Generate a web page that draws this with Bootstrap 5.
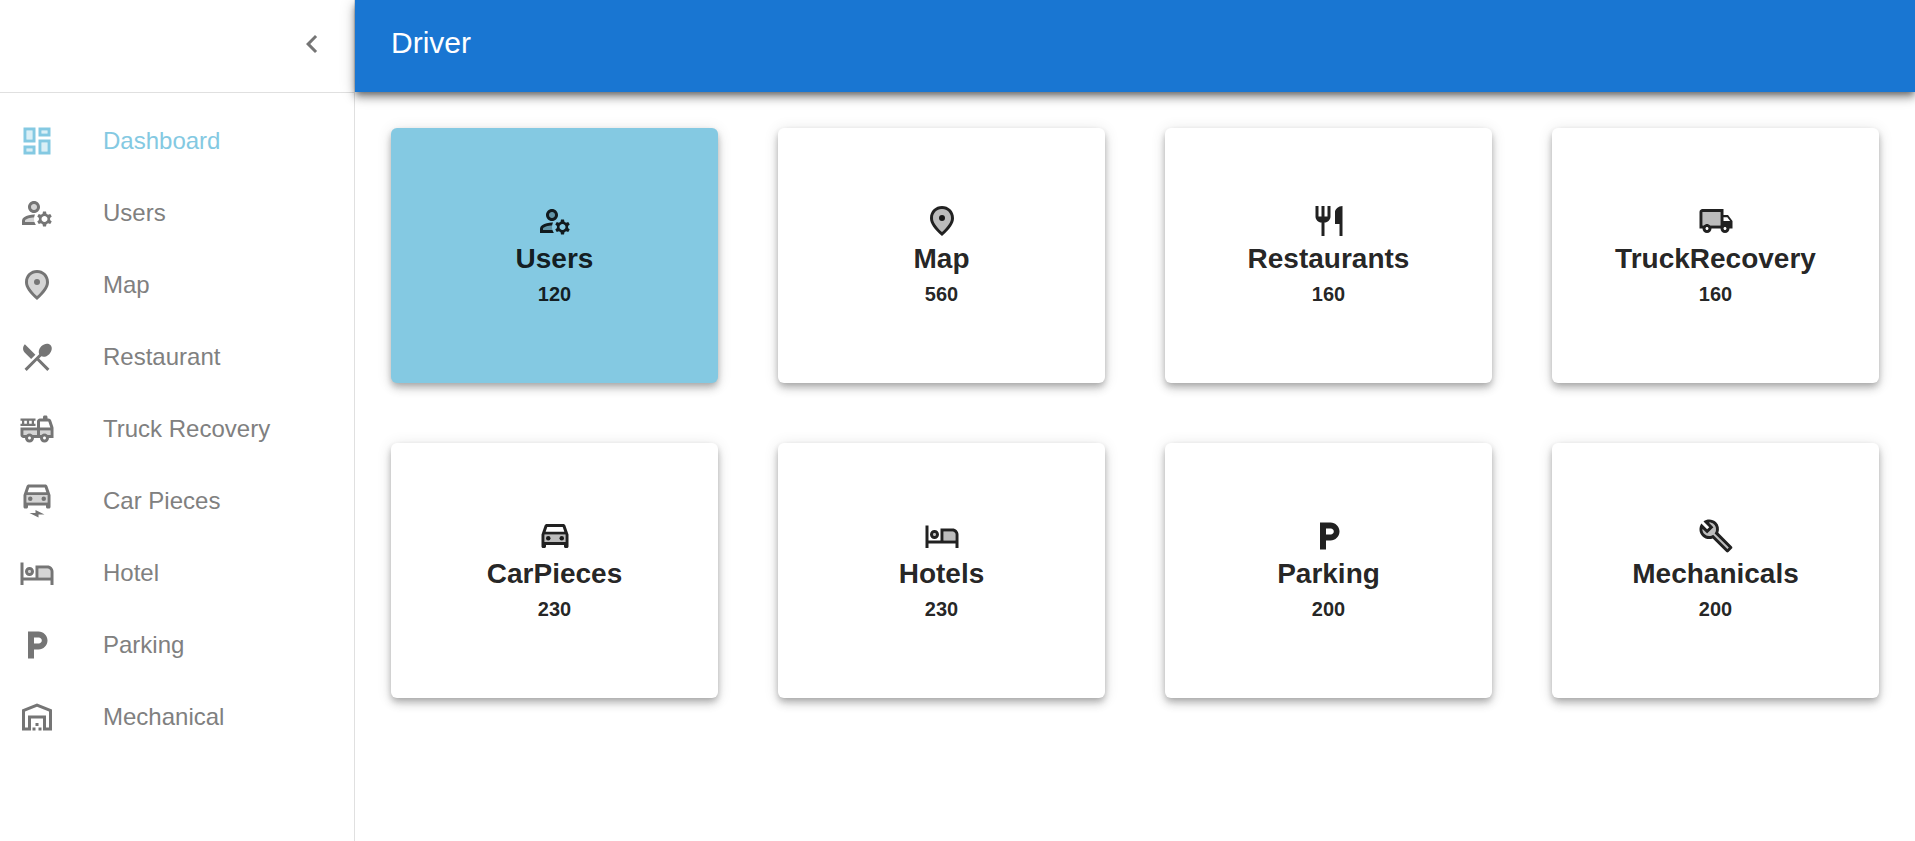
<!DOCTYPE html>
<html lang="en">
<head>
<meta charset="utf-8">
<meta name="viewport" content="width=device-width, initial-scale=1">
<title>Driver</title>
<link href="https://cdn.jsdelivr.net/npm/bootstrap@5.3.0/dist/css/bootstrap.min.css" rel="stylesheet">
<style>
  :root { --accent: #84c9e2; --line: #e0e0e0; --ink: rgba(0, 0, 0, .87); }
  body { font-family: "Liberation Sans", Arial, sans-serif; font-size: 24px; color: var(--ink); background: #fff; }
  .sidebar { width: 355px; border-right: 1px solid var(--line); }
  .sidebar-top { height: 93px; padding: 0 12px 4px 0; border-bottom: 1px solid var(--line); }
  .collapse-btn { width: 60px; height: 60px; padding: 0; border: 0; color: #757575; }
  .side-list { padding: 12px 0; }
  .side-link { height: 72px; padding: 0 19px; gap: 48px; color: #808080; border-radius: 0; }
  .side-link svg { color: #757575; }
  .side-link:hover { color: #606060; background: rgba(0, 0, 0, .04); }
  .side-link.active, .side-link.active svg { color: var(--accent); }
  .ico { width: 36px; height: 36px; fill: currentColor; flex: none; }
  .tone { opacity: .3; }
  .topbar { height: 92px; padding: 0 36px 6px; background: #1976d2; color: #fff;
    box-shadow: 0 3px 6px -2px rgba(0,0,0,.4), 0 6px 8px 0 rgba(0,0,0,.28), 0 2px 15px 0 rgba(0,0,0,.2); }
  .topbar h1 { font-size: 30px; line-height: 48px; font-weight: 400; }
  .content { padding: 36px; }
  .tiles { --bs-gutter-x: 60px; --bs-gutter-y: 60px; }
  .tile { height: 255px; border: 0; border-radius: 6px; color: var(--ink);
    box-shadow: 0 3px 6px -1px rgba(0,0,0,.2), 0 6px 8px 0 rgba(0,0,0,.14), 0 2px 15px 0 rgba(0,0,0,.12); }
  .tile.selected { background: var(--accent); }
  .tile h2 { font-size: 28px; line-height: 40px; font-weight: 700; }
  .tile p { font-size: 20px; line-height: 30px; font-weight: 700; }
</style>
</head>
<body>

<svg class="d-none" aria-hidden="true">
  <symbol id="i-chevron" viewBox="0 0 24 24"><path d="M15.41 7.41 14 6l-6 6 6 6 1.41-1.41L10.83 12z"/></symbol>
  <symbol id="i-dashboard" viewBox="0 0 24 24">
    <path class="tone" d="M5 5h4v6H5zm10 8h4v6h-4zM5 17h4v2H5zM15 5h4v2h-4z"/>
    <path d="M3 13h8V3H3v10zm2-8h4v6H5V5zm8 16h8V11h-8v10zm2-8h4v6h-4v-6zM13 3v6h8V3h-8zm6 4h-4V5h4v2zM3 21h8v-6H3v6zm2-4h4v2H5v-2z"/>
  </symbol>
  <symbol id="i-users" viewBox="0 0 24 24">
    <path class="tone" d="M10 15c-1.97 0-3.9.53-5.59 1.54-.25.15-.41.47-.41.81V18h6.29c-.19-.64-.29-1.31-.29-2 0-.34.03-.67.08-.99C10.05 15 10.03 15 10 15z"/>
    <circle class="tone" cx="10" cy="8" r="2"/>
    <path d="M4 18v-.65c0-.34.16-.66.41-.81C6.1 15.53 8.03 15 10 15c.03 0 .05 0 .08.01.1-.7.3-1.37.59-1.98-.22-.02-.44-.03-.67-.03-2.42 0-4.68.67-6.61 1.82-.88.52-1.39 1.5-1.39 2.53V20h9.26c-.42-.6-.75-1.28-.97-2H4zM10 12c2.21 0 4-1.79 4-4s-1.79-4-4-4-4 1.79-4 4 1.79 4 4 4zm0-6c1.1 0 2 .9 2 2s-.9 2-2 2-2-.9-2-2 .9-2 2-2zM20.75 16c0-.22-.03-.42-.06-.63l1.14-1.01-1-1.73-1.45.49c-.32-.27-.68-.48-1.08-.63L18 11h-2l-.3 1.49c-.4.15-.76.36-1.08.63l-1.45-.49-1 1.73 1.14 1.01c-.03.21-.06.41-.06.63s.03.42.06.63l-1.14 1.01 1 1.73 1.45-.49c.32.27.68.48 1.08.63L16 21h2l.3-1.49c.4-.15.76-.36 1.08-.63l1.45.49 1-1.73-1.14-1.01c.03-.21.06-.41.06-.63zM17 18c-1.1 0-2-.9-2-2s.9-2 2-2 2 .9 2 2-.9 2-2 2z"/>
  </symbol>
  <symbol id="i-map" viewBox="0 0 24 24">
    <path class="tone" d="M18 10.2C18 6.57 15.35 4 12 4s-6 2.57-6 6.2c0 2.34 1.95 5.44 6 9.14 4.05-3.7 6-6.8 6-9.14z"/>
    <path d="M12 2c4.2 0 8 3.22 8 8.2 0 3.32-2.67 7.25-8 11.8-5.33-4.55-8-8.48-8-11.8C4 5.22 7.8 2 12 2zm6 8.2C18 6.57 15.35 4 12 4s-6 2.57-6 6.2c0 2.34 1.95 5.44 6 9.14 4.05-3.7 6-6.8 6-9.14z" fill-rule="evenodd"/>
    <circle cx="12" cy="10" r="2"/>
  </symbol>
  <symbol id="i-menu" viewBox="0 0 24 24"><path d="M8.1 13.34l2.83-2.83L3.91 3.5c-1.56 1.56-1.56 4.09 0 5.66l4.19 4.18zm6.78-1.81c1.53.71 3.68.21 5.27-1.38 1.91-1.91 2.28-4.65.81-6.12-1.46-1.46-4.2-1.1-6.12.81-1.59 1.59-2.09 3.74-1.38 5.27L3.7 19.87l1.41 1.41L12 14.41l6.88 6.88 1.41-1.41L13.41 13l1.47-1.47z"/></symbol>
  <symbol id="i-restaurant" viewBox="0 0 24 24"><path d="M16 6v8h3v8h2V2c-2.76 0-5 2.24-5 4zm-5 3H9V2H7v7H5V2H3v7c0 2.21 1.79 4 4 4v9h2v-9c2.21 0 4-1.79 4-4V2h-2v7z"/></symbol>
  <symbol id="i-firetruck" viewBox="0 0 24 24">
    <path class="tone" d="M3 16h1.78c.55-.61 1.33-1 2.22-1s1.67.39 2.22 1H12v-3H3v3zm11-3v3h.78c.55-.61 1.34-1 2.22-1s1.67.39 2.22 1H21v-3h-7z"/>
    <path d="m22.9 10.69-1.44-4.32C21.18 5.55 20.42 5 19.56 5H19V4c0-.55-.45-1-1-1h-1c-.55 0-1 .45-1 1v1h-2c-1.1 0-2 .9-2 2v4H1v5c0 1.1.9 2 2 2h1c0 1.66 1.34 3 3 3s3-1.34 3-3h4c0 1.66 1.34 3 3 3s3-1.34 3-3h3v-6.68c0-.21-.03-.42-.1-.63zM14 7h5.56l1.33 4H14V7zM7 19c-.55 0-1-.45-1-1s.45-1 1-1 1 .45 1 1-.45 1-1 1zm5-3H9.22c-.55-.61-1.33-1-2.22-1s-1.67.39-2.22 1H3v-3h9v3zm5 3c-.55 0-1-.45-1-1s.45-1 1-1 1 .45 1 1-.45 1-1 1zm4-3h-1.78c-.55-.61-1.34-1-2.22-1s-1.67.39-2.22 1H14v-3h7v3zM11 8.5h-1v-2h1V5H1v1.5h1v2H1V10h10V8.5zm-5.75 0H3.5v-2h1.75v2zm3.25 0H6.75v-2H8.5v2z"/>
  </symbol>
  <symbol id="i-electric" viewBox="0 0 24 24">
    <path class="tone" d="M5 13h14V8H5v5z"/>
    <path d="M18.92 2.01C18.72 1.42 18.16 1 17.5 1h-11c-.66 0-1.21.42-1.42 1.01L3 8v8c0 .55.45 1 1 1h1c.55 0 1-.45 1-1v-1h12v1c0 .55.45 1 1 1h1c.55 0 1-.45 1-1V8l-2.08-5.99zM6.85 3h10.29l1.08 3.11H5.77L6.85 3zM19 13H5V8h14v5zM7 20h4v-2l6 3h-4v2z"/>
    <circle cx="7.5" cy="10.5" r="1.5"/><circle cx="16.5" cy="10.5" r="1.5"/>
  </symbol>
  <symbol id="i-car" viewBox="0 0 24 24">
    <path class="tone" d="M5 16h14v-5H5v5z"/>
    <path d="M18.92 5.01C18.72 4.42 18.16 4 17.5 4h-11c-.66 0-1.21.42-1.42 1.01L3 11v8c0 .55.45 1 1 1h1c.55 0 1-.45 1-1v-1h12v1c0 .55.45 1 1 1h1c.55 0 1-.45 1-1v-8l-2.08-5.99zM6.85 6h10.29l1.08 3.11H5.77L6.85 6zM19 16H5v-5h14v5z"/>
    <circle cx="7.5" cy="13.5" r="1.5"/><circle cx="16.5" cy="13.5" r="1.5"/>
  </symbol>
  <symbol id="i-hotel" viewBox="0 0 24 24">
    <path class="tone" d="M19 9h-6v6h8v-4c0-1.1-.9-2-2-2z"/><circle class="tone" cx="7" cy="11" r="1"/>
    <path d="M3 5H1v15h2v-3h18v3h2v-9c0-2.21-1.79-4-4-4h-8v8H3V5zm16 4c1.1 0 2 .9 2 2v4h-8V9h6zM7 14c1.66 0 3-1.34 3-3S8.66 8 7 8s-3 1.34-3 3 1.34 3 3 3zm0-4c.55 0 1 .45 1 1s-.45 1-1 1-1-.45-1-1 .45-1 1-1z"/>
  </symbol>
  <symbol id="i-parking" viewBox="0 0 24 24"><path d="M13 3H6v18h4v-6h3c3.31 0 6-2.69 6-6s-2.69-6-6-6zm.2 8H10V7h3.2c1.1 0 2 .9 2 2s-.9 2-2 2z"/></symbol>
  <symbol id="i-warehouse" viewBox="0 0 24 24"><path fill-rule="evenodd" d="M22 21V7L12 3 2 7v14h6v-8h8v8h6zM20 8.35V19h-2v-8H6v8H4V8.35l8-3.2 8 3.2zM11 19H9v2h2v-2zm2-3h-2v2h2v-2zm2 3h-2v2h2v-2z"/></symbol>
  <symbol id="i-truck" viewBox="0 0 24 24">
    <path class="tone" d="M3 15h.78c.55-.61 1.33-1 2.22-1s1.67.39 2.22 1H15V6H3v9z"/>
    <path d="M20 8h-3V4H3c-1.1 0-2 .9-2 2v11h2c0 1.66 1.34 3 3 3s3-1.34 3-3h6c0 1.66 1.34 3 3 3s3-1.34 3-3h2v-5l-3-4zm-.5 1.5 1.96 2.5H17V9.5h2.5zM6 18c-.55 0-1-.45-1-1s.45-1 1-1 1 .45 1 1-.45 1-1 1zm2.22-3c-.55-.61-1.33-1-2.22-1s-1.67.39-2.22 1H3V6h12v9H8.22zM18 18c-.55 0-1-.45-1-1s.45-1 1-1 1 .45 1 1-.45 1-1 1z"/>
  </symbol>
  <symbol id="i-wrench" viewBox="0 0 24 24">
    <path class="tone" d="M19.61 20.59l-9.46-9.46c-.61.45-1.29.72-2 .82-1.36.2-2.79-.21-3.83-1.25C3.37 9.76 2.93 8.5 3 7.26l3.09 3.09 4.24-4.24-3.09-3.09c1.24-.07 2.49.37 3.44 1.31 1.08 1.08 1.49 2.57 1.24 3.96-.12.71-.42 1.37-.88 1.96l9.45 9.45-.88.89z"/>
    <path d="M22.61 18.99l-9.08-9.08c.93-2.34.45-5.1-1.44-7C9.79.61 6.21.4 3.66 2.26L7.5 6.11 6.08 7.52 2.25 3.69C.39 6.23.6 9.82 2.9 12.11c1.86 1.86 4.57 2.35 6.89 1.48l9.11 9.11c.39.39 1.02.39 1.41 0l2.3-2.3c.4-.38.4-1.01 0-1.41zm-3 1.6l-9.46-9.46c-.61.45-1.29.72-2 .82-1.36.2-2.79-.21-3.83-1.25C3.37 9.76 2.93 8.5 3 7.26l3.09 3.09 4.24-4.24-3.09-3.09c1.24-.07 2.49.37 3.44 1.31 1.08 1.08 1.49 2.57 1.24 3.96-.12.71-.42 1.37-.88 1.96l9.45 9.45-.88.89z"/>
  </symbol>
</svg>

<div class="d-flex min-vh-100">
  <aside class="sidebar flex-shrink-0">
    <div class="sidebar-top d-flex align-items-center justify-content-end">
      <button type="button" class="collapse-btn btn rounded-circle d-flex align-items-center justify-content-center" aria-label="Collapse menu"><svg class="ico"><use href="#i-chevron"/></svg></button>
    </div>
    <nav class="side-list nav flex-column flex-nowrap" aria-label="Main">
      <a class="side-link nav-link d-flex align-items-center active" aria-current="page" href="#"><svg class="ico"><use href="#i-dashboard"/></svg>Dashboard</a>
      <a class="side-link nav-link d-flex align-items-center" href="#"><svg class="ico"><use href="#i-users"/></svg>Users</a>
      <a class="side-link nav-link d-flex align-items-center" href="#"><svg class="ico"><use href="#i-map"/></svg>Map</a>
      <a class="side-link nav-link d-flex align-items-center" href="#"><svg class="ico"><use href="#i-menu"/></svg>Restaurant</a>
      <a class="side-link nav-link d-flex align-items-center" href="#"><svg class="ico"><use href="#i-firetruck"/></svg>Truck Recovery</a>
      <a class="side-link nav-link d-flex align-items-center" href="#"><svg class="ico"><use href="#i-electric"/></svg>Car Pieces</a>
      <a class="side-link nav-link d-flex align-items-center" href="#"><svg class="ico"><use href="#i-hotel"/></svg>Hotel</a>
      <a class="side-link nav-link d-flex align-items-center" href="#"><svg class="ico"><use href="#i-parking"/></svg>Parking</a>
      <a class="side-link nav-link d-flex align-items-center" href="#"><svg class="ico"><use href="#i-warehouse"/></svg>Mechanical</a>
    </nav>
  </aside>

  <div class="flex-grow-1">
    <header class="topbar d-flex align-items-center">
      <h1 class="m-0">Driver</h1>
    </header>
    <main class="content">
      <div class="tiles row row-cols-1 row-cols-md-2 row-cols-lg-4 mt-0">
        <div class="col mt-0"><section class="tile selected card align-items-center justify-content-center"><svg class="ico"><use href="#i-users"/></svg><h2 class="m-0">Users</h2><p class="m-0">120</p></section></div>
        <div class="col mt-0"><section class="tile card align-items-center justify-content-center"><svg class="ico"><use href="#i-map"/></svg><h2 class="m-0">Map</h2><p class="m-0">560</p></section></div>
        <div class="col mt-0"><section class="tile card align-items-center justify-content-center"><svg class="ico"><use href="#i-restaurant"/></svg><h2 class="m-0">Restaurants</h2><p class="m-0">160</p></section></div>
        <div class="col mt-0"><section class="tile card align-items-center justify-content-center"><svg class="ico"><use href="#i-truck"/></svg><h2 class="m-0">TruckRecovery</h2><p class="m-0">160</p></section></div>
        <div class="col"><section class="tile card align-items-center justify-content-center"><svg class="ico"><use href="#i-car"/></svg><h2 class="m-0">CarPieces</h2><p class="m-0">230</p></section></div>
        <div class="col"><section class="tile card align-items-center justify-content-center"><svg class="ico"><use href="#i-hotel"/></svg><h2 class="m-0">Hotels</h2><p class="m-0">230</p></section></div>
        <div class="col"><section class="tile card align-items-center justify-content-center"><svg class="ico"><use href="#i-parking"/></svg><h2 class="m-0">Parking</h2><p class="m-0">200</p></section></div>
        <div class="col"><section class="tile card align-items-center justify-content-center"><svg class="ico"><use href="#i-wrench"/></svg><h2 class="m-0">Mechanicals</h2><p class="m-0">200</p></section></div>
      </div>
    </main>
  </div>
</div>

<script src="https://cdn.jsdelivr.net/npm/bootstrap@5.3.0/dist/js/bootstrap.bundle.min.js"></script>
</body>
</html>
